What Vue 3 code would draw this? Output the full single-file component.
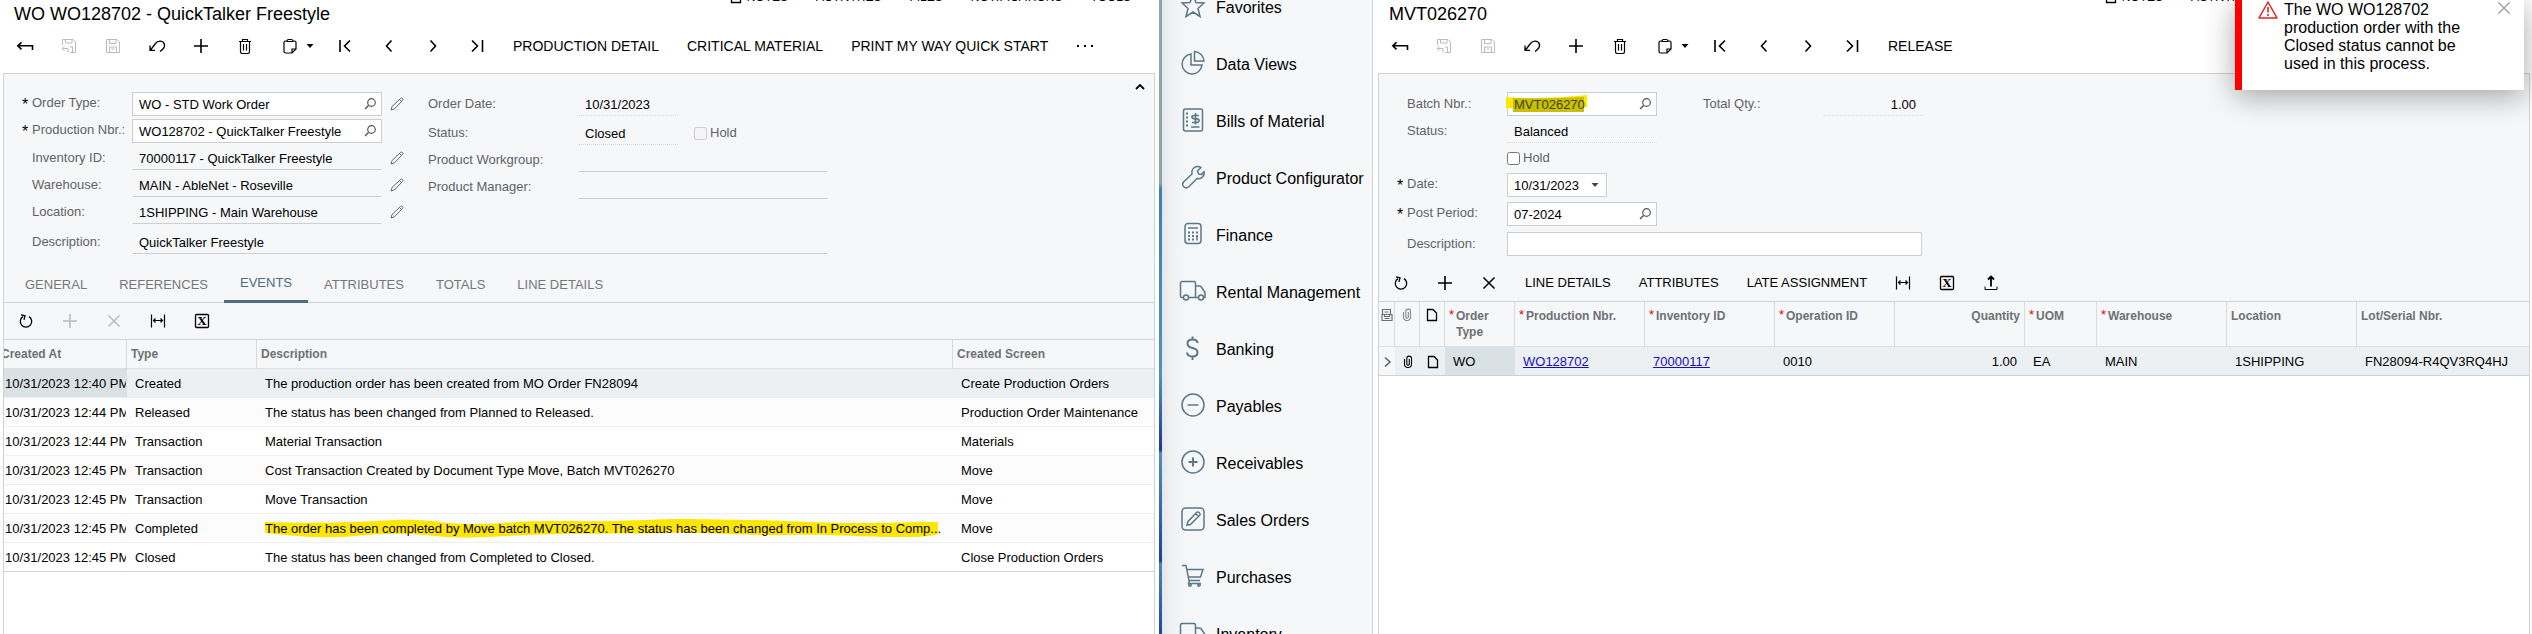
<template>
  <div class="screen">
    <section class="window">
      <header class="title-bar">
        <h1>WO WO128702 - QuickTalker Freestyle</h1>
        <nav class="links">
          <a v-for="link in links" :key="link" href="#">
            <svg v-if="link === 'NOTES'" class="note-icon" viewBox="0 0 14 14" v-html="icons.note"></svg>{{ link }}
          </a>
        </nav>
      </header>

      <div class="toolbar main-toolbar">
        <button v-for="tool in mainTools" :key="tool.icon" type="button" class="tool" :class="{ wide: tool.menu }" :disabled="tool.disabled" :aria-label="tool.label">
          <svg class="icon" viewBox="0 0 20 20" v-html="icons[tool.icon]"></svg>
          <svg v-if="tool.menu" class="caret" viewBox="0 0 8 4" v-html="icons.caret"></svg>
        </button>
        <button v-for="action in orderActions" :key="action" type="button" class="text-tool">{{ action }}</button>
        <button type="button" class="text-tool" aria-label="More">
          <svg class="dots" viewBox="0 0 18 4" v-html="icons.dots"></svg>
        </button>
      </div>

      <div class="panel">
        <form class="form order-form" @submit.prevent>
          <button type="button" class="collapse" aria-label="Collapse">
            <svg viewBox="0 0 12 12" v-html="icons.up"></svg>
          </button>
          <div class="columns">
            <div class="column">
              <div v-for="field in orderFields" :key="field.id" class="row">
                <label :for="field.id"><span class="star">{{ field.required ? '*' : '' }}</span>{{ field.label }}</label>
                <div class="field w250" :class="field.required ? 'boxed' : 'lined'">
                  <input :id="field.id" v-model="field.value" type="text" />
                  <svg v-if="field.required" class="search" viewBox="0 0 14 14" v-html="icons.search"></svg>
                </div>
                <button v-if="field.edit" type="button" class="edit" :aria-label="'Edit ' + field.label">
                  <svg viewBox="0 0 14 14" v-html="icons.pencil"></svg>
                </button>
              </div>
            </div>
            <div class="column second">
              <div class="row loose">
                <label for="orderDate">Order Date:</label>
                <div class="field w100 dotted"><input id="orderDate" v-model="order.date" type="text" readonly /></div>
              </div>
              <div class="row">
                <label for="orderStatus">Status:</label>
                <div class="field w100 dotted"><input id="orderStatus" v-model="order.status" type="text" readonly /></div>
                <label class="check muted"><input v-model="order.hold" type="checkbox" disabled />Hold</label>
              </div>
              <div class="row">
                <label for="workgroup">Product Workgroup:</label>
                <div class="field w250 lined"><input id="workgroup" v-model="order.workgroup" type="text" /></div>
              </div>
              <div class="row">
                <label for="manager">Product Manager:</label>
                <div class="field w250 lined"><input id="manager" v-model="order.manager" type="text" /></div>
              </div>
            </div>
          </div>
          <div class="row last">
            <label for="orderDescription"><span class="star"></span>Description:</label>
            <div class="field w696 lined"><input id="orderDescription" v-model="order.description" type="text" /></div>
          </div>
        </form>

        <div class="tabs" role="tablist">
          <button v-for="tab in tabs" :key="tab" type="button" role="tab" class="tab" :class="{ active: tab === activeTab }" :aria-selected="tab === activeTab" @click="activeTab = tab">{{ tab }}</button>
        </div>

        <div class="toolbar grid-toolbar">
          <button v-for="tool in eventTools" :key="tool.icon" type="button" class="tool" :disabled="tool.disabled" :aria-label="tool.label">
            <svg class="icon" viewBox="0 0 20 20" v-html="icons[tool.icon]"></svg>
          </button>
        </div>

        <div class="grid-wrap">
          <table class="grid events">
            <colgroup>
              <col class="c130" />
              <col class="c130" />
              <col />
              <col class="c201" />
            </colgroup>
            <thead>
              <tr>
                <th>Created At</th>
                <th>Type</th>
                <th>Description</th>
                <th>Created Screen</th>
              </tr>
            </thead>
            <tbody>
              <tr v-for="(event, index) in events" :key="index" :class="{ selected: index === 0 }">
                <td class="clip">{{ event.createdAt }}</td>
                <td>{{ event.type }}</td>
                <td>
                  <div v-if="event.marked" class="marked">
                    <svg class="marker" viewBox="0 0 672 20" preserveAspectRatio="none">
                      <path d="M0 3C30 4 60 4 90 3S130 0 152 1S180 5 210 5S250 2 290 2S330 3 380 1S440 1 480 1S550 4 590 4S640 3 672 3V15C660 19 640 18 620 18S560 15 520 16S440 13 400 14S300 14 260 16S200 20 170 17S120 14 90 17S30 17 0 14Z" fill="#ffe600" />
                    </svg>
                    <div class="ellipsis">{{ event.description }}</div>
                  </div>
                  <template v-else>{{ event.description }}</template>
                </td>
                <td>{{ event.screen }}</td>
              </tr>
            </tbody>
          </table>
        </div>
      </div>
    </section>

    <div class="divider"></div>

    <section class="window with-nav">
      <nav class="side-nav">
        <a v-for="item in modules" :key="item.label" href="#">
          <svg viewBox="0 0 28 28" v-html="icons[item.icon]"></svg>{{ item.label }}
        </a>
      </nav>

      <div class="content">
        <header class="title-bar">
          <h1>MVT026270</h1>
          <nav class="links">
            <a v-for="link in links" :key="link" href="#">
              <svg v-if="link === 'NOTES'" class="note-icon" viewBox="0 0 14 14" v-html="icons.note"></svg>{{ link }}
            </a>
          </nav>
        </header>

        <div class="toolbar main-toolbar">
          <button v-for="tool in mainTools" :key="tool.icon" type="button" class="tool" :class="{ wide: tool.menu }" :disabled="tool.disabled" :aria-label="tool.label">
            <svg class="icon" viewBox="0 0 20 20" v-html="icons[tool.icon]"></svg>
            <svg v-if="tool.menu" class="caret" viewBox="0 0 8 4" v-html="icons.caret"></svg>
          </button>
          <button type="button" class="text-tool">RELEASE</button>
        </div>

        <div class="panel">
          <form class="form move-form" @submit.prevent>
            <div class="columns">
              <div class="column">
                <div class="row">
                  <label for="batch"><span class="star"></span>Batch Nbr.:</label>
                  <div class="field w150 boxed">
                    <svg class="batch-marker" viewBox="0 0 82 18">
                      <path d="M0 2C25 4 50 3 81 0V12C74 13 77 17 66 17H28L12 14L0 13Z" fill="#ffe600" />
                      <path d="M7 3C35 4 55 3 78 2V17H7Z" fill="#c9be08" />
                    </svg>
                    <input id="batch" v-model="move.batch" class="batch-input" type="text" />
                    <svg class="search" viewBox="0 0 14 14" v-html="icons.search"></svg>
                  </div>
                </div>
                <div class="row">
                  <label for="moveStatus"><span class="star"></span>Status:</label>
                  <div class="field w150 dotted"><input id="moveStatus" v-model="move.status" type="text" readonly /></div>
                </div>
                <div class="row">
                  <span class="label-gap"></span>
                  <label class="check"><input v-model="move.hold" type="checkbox" />Hold</label>
                </div>
                <div class="row loose">
                  <label for="moveDate"><span class="star">*</span>Date:</label>
                  <div class="field w100 boxed">
                    <input id="moveDate" v-model="move.date" type="text" />
                    <svg class="caret date-caret" viewBox="0 0 8 4" v-html="icons.caret"></svg>
                  </div>
                </div>
                <div class="row">
                  <label for="period"><span class="star">*</span>Post Period:</label>
                  <div class="field w150 boxed">
                    <input id="period" v-model="move.period" type="text" />
                    <svg class="search" viewBox="0 0 14 14" v-html="icons.search"></svg>
                  </div>
                </div>
              </div>
              <div class="column totals">
                <div class="row">
                  <label for="totalQty">Total Qty.:</label>
                  <div class="field w100 dotted"><input id="totalQty" v-model="move.total" class="number" type="text" readonly /></div>
                </div>
              </div>
            </div>
            <div class="row last">
              <label for="moveDescription"><span class="star"></span>Description:</label>
              <div class="field w415 boxed"><input id="moveDescription" v-model="move.description" type="text" /></div>
            </div>
          </form>

          <div class="toolbar grid-toolbar">
            <template v-for="tool in lineTools" :key="tool.label">
              <button v-if="tool.icon" type="button" class="tool" :aria-label="tool.label">
                <svg class="icon" viewBox="0 0 20 20" v-html="icons[tool.icon]"></svg>
              </button>
              <button v-else type="button" class="text-tool small">{{ tool.label }}</button>
            </template>
          </div>

          <div class="grid-wrap">
            <table class="grid lines">
              <colgroup>
                <col class="c16" />
                <col class="c25" />
                <col class="c25" />
                <col class="c70" />
                <col class="c130" />
                <col class="c130" />
                <col class="c120" />
                <col class="c130" />
                <col class="c72" />
                <col class="c130" />
                <col class="c130" />
                <col />
              </colgroup>
              <thead>
                <tr>
                  <th class="icon-cell"><svg viewBox="0 0 14 14" v-html="icons.rows"></svg></th>
                  <th class="icon-cell faded"><svg viewBox="0 0 14 14" v-html="icons.clip"></svg></th>
                  <th class="icon-cell dark"><svg viewBox="0 0 14 14" v-html="icons.note"></svg></th>
                  <th v-for="col in lineColumns" :key="col.label" :class="{ number: col.number, required: col.required }">{{ col.label }}</th>
                </tr>
              </thead>
              <tbody>
                <tr class="selected">
                  <td class="icon-cell arrow"><svg viewBox="0 0 14 14" v-html="icons.right"></svg></td>
                  <td class="icon-cell"><svg viewBox="0 0 14 14" v-html="icons.clip"></svg></td>
                  <td class="icon-cell"><svg viewBox="0 0 14 14" v-html="icons.note"></svg></td>
                  <td class="current">WO</td>
                  <td><a href="#">WO128702</a></td>
                  <td><a href="#">70000117</a></td>
                  <td>0010</td>
                  <td class="number">1.00</td>
                  <td>EA</td>
                  <td>MAIN</td>
                  <td>1SHIPPING</td>
                  <td>FN28094-R4QV3RQ4HJ</td>
                </tr>
              </tbody>
            </table>
          </div>
        </div>
      </div>

      <div v-if="showAlert" class="alert" role="alert">
        <svg class="warning" viewBox="0 0 20 20" v-html="icons.warning"></svg>
        <p>The WO WO128702 production order with the Closed status cannot be used in this process.</p>
        <button type="button" aria-label="Close" @click="showAlert = false">
          <svg viewBox="0 0 14 14" v-html="icons.close"></svg>
        </button>
      </div>
    </section>
  </div>
</template>

<script setup>
import { ref } from 'vue';

// inner markup of each svg, strokes follow currentColor
const icons = {
  back: '<path d="M2.500 9.800H17.500V14M6.500 6.300L2.800 9.800L6.500 13.300" stroke-width="1.6"/>',
  saveClose: '<path d="M3.5 9V3.500H14L16.500 6V16.500H11M6.500 3.500V7H13V3.500M11 11H13.500V16M9 16.500V12.500H3.500M5.500 10L3 12.500L5.500 15"/>',
  save: '<path d="M3.500 3.500H14L16.500 6V16.500H3.500ZM6.500 3.500V7.500H13V3.500M6.500 16.500V11H13.500V16.500M8.500 13H11.500"/>',
  undo: '<path d="M3.500 14L8.500 7.500C11 4 16.500 4.500 17.500 8.500C18 11.500 16 13.500 13 15.500M3 9.500V14.300H8" stroke-width="1.3"/>',
  plus: '<path d="M10 3V17M3 10H17" stroke-width="1.6"/>',
  trash: '<path d="M4 5.500H16M7.500 5.500V3.500H12.500V5.500M5.500 5.500V15.500Q5.500 17.500 7 17.500H13Q14.500 17.500 14.500 15.500V5.500M8.500 8V14.500M11.500 8V14.500" stroke-width="1.2"/>',
  clipboard: '<path d="M7 5H5.500Q4 5 4 6.500V15.500Q4 17 5.500 17H12L16 13V6.500Q16 5 14.500 5H13M7 5.500Q7 3.500 8.500 3.500H11.500Q13 3.500 13 5.500ZM12 17V13H16" stroke-width="1.2"/>',
  first: '<path d="M5 4V16M15 4.500L9.500 10L15 15.500" stroke-width="1.6"/>',
  prev: '<path d="M12.500 4.500L7.500 10L12.500 15.500" stroke-width="1.6"/>',
  next: '<path d="M7.500 4.500L12.500 10L7.500 15.500" stroke-width="1.6"/>',
  last: '<path d="M5 4.500L10.500 10L5 15.500M15.500 4V16" stroke-width="1.6"/>',
  refresh: '<path d="M7 5.600A5.700 5.700 0 1 0 13 5.600M5 3.800L9 4.800L8 8.800" stroke-width="1.3"/>',
  remove: '<path d="M4.500 4.500L15.500 15.500M15.500 4.500L4.500 15.500" stroke-width="1.5"/>',
  fit: '<path d="M3.500 3.500V16.500M16.500 3.500V16.500M5.500 9.500H14.500M7.500 7.500L5.500 9.500L7.500 11.500M12.500 7.500L14.500 9.500L12.500 11.500" stroke-width="1.2"/>',
  excel: '<rect x="3.500" y="3.500" width="13" height="13" rx="1" stroke-width="1.3"/><text x="10" y="14" text-anchor="middle" font-family="Liberation Serif, serif" font-weight="700" font-size="13" fill="currentColor" stroke="none">X</text>',
  upload: '<path d="M10 13.500V4M7 6.500L10 3.500L13 6.500" stroke-width="1.8"/><path d="M4 13.500V16.500H16V13.500"/>',
  caret: '<path d="M0.500 0H7.500L4 4Z" fill="currentColor" stroke="none"/>',
  dots: '<path d="M1 1H3V3H1ZM8 1H10V3H8ZM15 1H17V3H15Z" fill="currentColor" stroke="none"/>',
  up: '<path d="M2 8L6 4L10 8" stroke-width="1.8"/>',
  search: '<circle cx="8.500" cy="5.500" r="3.800" stroke-width="1.2"/><path d="M5.500 8.500L2 12" stroke-width="1.5"/>',
  pencil: '<path d="M1 13L2 9.500L10.500 1.500Q11.500 0.500 12.500 1.500T12.500 3.500L4.500 11.800ZM9.500 2.500L11.500 4.500"/>',
  note: '<path d="M2.500 1.500H8L11.500 5V12.500H2.500Z" stroke-width="1.3"/>',
  clip: '<path d="M3.500 4V9A3 3 0 0 0 10.500 9V3.500A2 2 0 0 0 5.800 3.500V9A1 1 0 0 0 8.300 9V4" stroke-width="1.1"/>',
  rows: '<path d="M2.500 6V1.500H10.500V6M4.500 4H8.500M2 6.500H12V12.500H2ZM4.500 6.500V8.500H9.500V6.500M4.500 10.500H9.500" stroke-width="1.200"/>',
  right: '<path d="M5 2.500L10 7L5 11.500" stroke-width="1.6"/>',
  close: '<path d="M1.500 1.500L12.500 12.500M12.500 1.500L1.500 12.500" stroke-width="1.2"/>',
  warning: '<path d="M10 1L19 17H1Z" stroke-width="1.500" stroke-linejoin="round"/><path d="M10 6V11.500M10 13V15" stroke-width="1.600"/>',
  star: '<path d="M14 3L17 10.500L25 11L19 16.500L21 24.500L14 20L7 24.500L9 16.500L3 11L11 10.500Z"/>',
  pie: '<path d="M12 5A10 10 0 1 0 23 16H12Z"/><path d="M15.500 2.500A10 10 0 0 1 25 12H15.500Z"/>',
  bill: '<rect x="4.500" y="3" width="19" height="22" rx="2"/><path d="M8 6.500V21" stroke-width="2" stroke-dasharray="2 2"/><path d="M12 21H20.500M20 9.500H15Q13 9.500 13 11T15 12.800H18Q20 12.800 20 14.500T18 16.500H13M16.500 7V18.500" stroke-width="1.7"/>',
  wrench: '<path d="M22 4.500L18.500 8L19.500 11L22.500 11.500L25 8.500C26 13 22.500 16.500 18 15.500L9.500 24C6 26.500 2 22.500 4.500 19L13 11C12 6 16.500 1.500 22 4.500Z" stroke-linejoin="round"/>',
  calculator: '<rect x="6" y="3.500" width="16" height="20" rx="3"/><path d="M9 8H19"/><path d="M9 12.500H19M9 16H19M9 19.500H15" stroke-width="2" stroke-dasharray="2 2"/><path d="M18 16V20.500"/>',
  truck: '<path d="M4.500 20.500H2.500Q1.500 20.500 1.500 19V6Q1.500 4.500 3 4.500H15Q16.500 4.500 16.500 6V20.500H9.500M16.500 9H20.500Q22 9 23 11L26 15.500V20.500H24.500M19.500 20.500H16.500"/><circle cx="7" cy="20.500" r="2.500"/><circle cx="22" cy="20.500" r="2.500"/>',
  dollar: '<path d="M18.500 9Q18.500 5.500 13.500 5.500T8.500 9.500Q8.500 13 13.500 14T18.500 18.500Q18.500 22.500 13.500 22.500T8 18.500M13.500 2.500V5.500M13.500 22.500V26" stroke-width="2"/>',
  minus: '<circle cx="14" cy="14" r="11"/><path d="M8.500 14H19.500"/>',
  add: '<circle cx="14" cy="14" r="11"/><path d="M9.500 14H18.500M14 9.500V18.500" stroke-width="2"/>',
  order: '<rect x="3" y="3" width="22" height="22" rx="3.500"/><path d="M8 20L9 16.500L17.500 7.500Q19 6.500 20.500 8T20 11L11.500 19.500ZM16.500 8.500L19.500 11.500"/>',
  cart: '<path d="M3 3.500H7L10 18.500H21M8 7.500H24L21.500 15H9.500M10.500 18.500L9.500 21.500H22"/><circle cx="11" cy="23" r="1.200"/><circle cx="20" cy="23" r="1.200"/>'
};

const links = ['NOTES', 'ACTIVITIES', 'FILES', 'NOTIFICATIONS', 'TOOLS'];

const mainTools = [
  { icon: 'back', label: 'Back' },
  { icon: 'saveClose', label: 'Save and close', disabled: true },
  { icon: 'save', label: 'Save', disabled: true },
  { icon: 'undo', label: 'Undo' },
  { icon: 'plus', label: 'Add' },
  { icon: 'trash', label: 'Delete' },
  { icon: 'clipboard', label: 'Clipboard', menu: true },
  { icon: 'first', label: 'First' },
  { icon: 'prev', label: 'Previous' },
  { icon: 'next', label: 'Next' },
  { icon: 'last', label: 'Last' }
];

const orderActions = ['PRODUCTION DETAIL', 'CRITICAL MATERIAL', 'PRINT MY WAY QUICK START'];

const orderFields = ref([
  { id: 'orderType', label: 'Order Type:', value: 'WO - STD Work Order', required: true, edit: true },
  { id: 'productionNbr', label: 'Production Nbr.:', value: 'WO128702 - QuickTalker Freestyle', required: true },
  { id: 'inventory', label: 'Inventory ID:', value: '70000117 - QuickTalker Freestyle', edit: true },
  { id: 'warehouse', label: 'Warehouse:', value: 'MAIN - AbleNet - Roseville', edit: true },
  { id: 'location', label: 'Location:', value: '1SHIPPING - Main Warehouse', edit: true }
]);

const order = ref({
  date: '10/31/2023',
  status: 'Closed',
  hold: false,
  workgroup: '',
  manager: '',
  description: 'QuickTalker Freestyle'
});

const tabs = ['GENERAL', 'REFERENCES', 'EVENTS', 'ATTRIBUTES', 'TOTALS', 'LINE DETAILS'];
const activeTab = ref('EVENTS');

const eventTools = [
  { icon: 'refresh', label: 'Refresh' },
  { icon: 'plus', label: 'Add row', disabled: true },
  { icon: 'remove', label: 'Delete row', disabled: true },
  { icon: 'fit', label: 'Fit to screen' },
  { icon: 'excel', label: 'Export to Excel' }
];

const events = [
  { createdAt: '10/31/2023 12:40 PM', type: 'Created', description: 'The production order has been created from MO Order FN28094', screen: 'Create Production Orders' },
  { createdAt: '10/31/2023 12:44 PM', type: 'Released', description: 'The status has been changed from Planned to Released.', screen: 'Production Order Maintenance' },
  { createdAt: '10/31/2023 12:44 PM', type: 'Transaction', description: 'Material Transaction', screen: 'Materials' },
  { createdAt: '10/31/2023 12:45 PM', type: 'Transaction', description: 'Cost Transaction Created by Document Type Move, Batch MVT026270', screen: 'Move' },
  { createdAt: '10/31/2023 12:45 PM', type: 'Transaction', description: 'Move Transaction', screen: 'Move' },
  { createdAt: '10/31/2023 12:45 PM', type: 'Completed', description: 'The order has been completed by Move batch MVT026270. The status has been changed from In Process to Comp...', screen: 'Move', marked: true },
  { createdAt: '10/31/2023 12:45 PM', type: 'Closed', description: 'The status has been changed from Completed to Closed.', screen: 'Close Production Orders' }
];

const modules = [
  { icon: 'star', label: 'Favorites' },
  { icon: 'pie', label: 'Data Views' },
  { icon: 'bill', label: 'Bills of Material' },
  { icon: 'wrench', label: 'Product Configurator' },
  { icon: 'calculator', label: 'Finance' },
  { icon: 'truck', label: 'Rental Management' },
  { icon: 'dollar', label: 'Banking' },
  { icon: 'minus', label: 'Payables' },
  { icon: 'add', label: 'Receivables' },
  { icon: 'order', label: 'Sales Orders' },
  { icon: 'cart', label: 'Purchases' },
  { icon: 'truck', label: 'Inventory' }
];

const move = ref({
  batch: 'MVT026270',
  status: 'Balanced',
  hold: false,
  date: '10/31/2023',
  period: '07-2024',
  total: '1.00',
  description: ''
});

const lineTools = [
  { icon: 'refresh', label: 'Refresh' },
  { icon: 'plus', label: 'Add row' },
  { icon: 'remove', label: 'Delete row' },
  { label: 'LINE DETAILS' },
  { label: 'ATTRIBUTES' },
  { label: 'LATE ASSIGNMENT' },
  { icon: 'fit', label: 'Fit to screen' },
  { icon: 'excel', label: 'Export to Excel' },
  { icon: 'upload', label: 'Upload' }
];

const lineColumns = [
  { label: 'Order Type', required: true },
  { label: 'Production Nbr.', required: true },
  { label: 'Inventory ID', required: true },
  { label: 'Operation ID', required: true },
  { label: 'Quantity', number: true },
  { label: 'UOM', required: true },
  { label: 'Warehouse', required: true },
  { label: 'Location' },
  { label: 'Lot/Serial Nbr.' }
];

const showAlert = ref(true);
</script>

<style>
body {
  margin: 0;
  background: #fff;
}
</style>

<style scoped>
* {
  box-sizing: border-box;
}

.screen {
  display: grid;
  grid-template-columns: 1159fr 3px 1370fr;
  height: 100vh;
  overflow: hidden;
  font-family: "Liberation Sans", Arial, sans-serif;
  font-size: 13px;
  line-height: 16px;
  color: #000;
}

svg {
  display: block;
  flex: none;
  fill: none;
  stroke: currentColor;
}

button,
input {
  font: inherit;
  color: inherit;
}

button {
  display: flex;
  align-items: center;
  justify-content: center;
  padding: 0;
  border: 0;
  background: none;
}

.window {
  position: relative;
  display: flex;
  flex-direction: column;
  min-width: 0;
  min-height: 0;
  overflow: hidden;
}

.window.with-nav {
  flex-direction: row;
}

.content {
  display: flex;
  flex: 1;
  flex-direction: column;
  min-width: 0;
}

.divider {
  background: linear-gradient(
    #8fa0ad 0, #8fa0ad 183px, #3a80b4 190px, #4287b6 260px, #4b97b2 375px,
    #17389a 450px, #4a94ae 453px, #2c62ae 520px, #1a3fa2 561px, #4689ad 564px, #1d47a6 634px
  );
}

/* title and links */
.title-bar {
  display: flex;
  align-items: flex-start;
  justify-content: space-between;
  height: 28px;
  padding: 0 28px 0 14px;
}

h1 {
  margin: 4px 0 0;
  font-size: 18px;
  font-weight: 400;
  line-height: 20px;
}

.links {
  display: flex;
  gap: 28px;
  margin-top: -10px;
  font-size: 12px;
  line-height: 14px;
}

.links a {
  display: flex;
  align-items: center;
  gap: 4px;
  color: #000;
  text-decoration: none;
}

.note-icon {
  width: 14px;
  height: 14px;
}

/* toolbars */
.toolbar {
  display: flex;
  align-items: center;
}

.main-toolbar {
  height: 45px;
  padding: 0 0 9px 3px;
}

.content .main-toolbar {
  padding-left: 5px;
}

.content .title-bar {
  padding: 0 26px 0 16px;
}

.grid-toolbar {
  height: 37px;
  border-bottom: 1px solid #cfd2d5;
  background: #f5f7f9;
}

.tool {
  width: 44px;
  height: 32px;
}

.tool.wide {
  gap: 6px;
  width: 56px;
  padding-left: 3px;
}

.tool:disabled {
  color: #bbb;
}

.icon {
  width: 20px;
  height: 20px;
}

.caret {
  width: 8px;
  height: 4px;
}

.text-tool {
  height: 32px;
  padding: 0 14px;
  font-size: 14px;
  white-space: nowrap;
}

.text-tool.small {
  font-size: 13px;
}

.dots {
  width: 18px;
  height: 4px;
}

/* panels */
.panel {
  display: flex;
  flex: 1;
  flex-direction: column;
  margin: 0 4px 0 3px;
  border: 1px solid #cfd2d5;
  border-bottom: 0;
}

.content .panel {
  margin: 0 2px 0 5px;
}

.form {
  position: relative;
  padding: 18px 18px 12px;
  background: #f5f7f9;
}

.move-form {
  padding-bottom: 9px;
}

.collapse {
  position: absolute;
  top: 6px;
  right: 7px;
  width: 14px;
  height: 14px;
}

.collapse svg {
  width: 12px;
  height: 12px;
}

.columns {
  display: flex;
}

.column.second {
  margin-left: 16px;
}

.column.totals {
  margin-left: 46px;
}

.row {
  display: flex;
  align-items: center;
  height: 24px;
  margin-bottom: 3px;
}

.row.loose {
  margin-bottom: 5px;
}

.row.last {
  margin: 3px 0 0;
}

.row > label,
.label-gap {
  display: flex;
  flex: none;
  width: 110px;
  color: #5f6368;
  white-space: nowrap;
}

.second .row > label {
  width: 150px;
}

.totals .row > label {
  width: 120px;
}

.star {
  width: 10px;
  padding-top: 2px;
  color: #000;
  font-size: 16px;
}

.row > label.check {
  align-items: center;
  gap: 3px;
  width: auto;
}

.row > label.muted {
  margin-left: 16px;
}

.check input {
  width: 13px;
  height: 13px;
  margin: 0;
}

.field {
  position: relative;
  display: flex;
  align-items: center;
  height: 24px;
  border: 1px solid transparent;
}

.field input {
  flex: 1;
  width: 100%;
  min-width: 0;
  height: 22px;
  padding: 1px 6px 0;
  border: 0;
  outline: none;
  background: none;
}

.boxed {
  border-color: #cccfd2;
  background: #fff;
}

.lined {
  border-bottom-color: #cccfd2;
}

.dotted {
  border-bottom: 1px dotted #d6d9dc;
}

.w100 {
  width: 100px;
}

.w150 {
  width: 150px;
}

.w250 {
  width: 250px;
}

.w415 {
  width: 415px;
}

.w696 {
  width: 696px;
}

.search {
  width: 14px;
  height: 14px;
  margin-right: 4px;
  color: #555;
}

.date-caret {
  margin-right: 7px;
  color: #444;
}

.batch-marker {
  position: absolute;
  top: 2px;
  left: -2px;
  width: 82px;
  height: 18px;
  stroke: none;
}

.field .batch-input {
  position: relative;
  color: #45430a;
}

.field input.number {
  text-align: right;
}

.edit {
  width: 30px;
  height: 24px;
  color: #666;
}

.edit svg {
  width: 14px;
  height: 14px;
}

/* tabs */
.tabs {
  display: flex;
  height: 37px;
  padding-left: 5px;
  border-bottom: 1px solid #cfd2d5;
  background: #f5f7f9;
}

.tab {
  height: 37px;
  padding: 0 16px;
  color: #777;
}

.tab.active {
  border-bottom: 3px solid #4f6c80;
  color: #4f6c80;
}

/* grids */
.grid-wrap {
  overflow: hidden;
}

.grid {
  width: 100%;
  table-layout: fixed;
  border-collapse: separate;
  border-spacing: 0;
}

.events {
  width: calc(100% + 7px);
  margin-left: -7px;
}

.c16 { width: 16px; }
.c25 { width: 25px; }
.c70 { width: 70px; }
.c72 { width: 72px; }
.c120 { width: 120px; }
.c130 { width: 130px; }
.c201 { width: 201px; }

th {
  padding: 6px 4px;
  border-right: 1px solid #d8dcdf;
  border-bottom: 1px solid #dbe0e4;
  background: #f5f7f9;
  color: #6e7174;
  font-size: 12px;
  font-weight: 700;
  text-align: left;
  vertical-align: top;
}

th:last-child {
  border-right: 0;
}

th.required {
  position: relative;
  padding-left: 11px;
}

th.required::before {
  content: "*";
  position: absolute;
  top: 5px;
  left: 4px;
  color: #e00;
  font-size: 13px;
  font-weight: 400;
}

td {
  height: 29px;
  padding: 1px 8px 0;
  border-bottom: 1px solid #edeff1;
  overflow: hidden;
  text-overflow: ellipsis;
  white-space: nowrap;
}

td.clip {
  text-overflow: clip;
  padding-right: 0;
  border-right: 1px solid transparent;
}

tbody tr:nth-child(even) td {
  background: #fcfcfc;
}

tr.selected td {
  background: #ecf0f3;
}

tr.selected td.clip,
tr.selected td.current {
  background: #dae1e5;
}

tbody tr:last-child td {
  border-bottom-color: #cfd2d5;
}

th.number,
td.number {
  text-align: right;
}

td a {
  color: #1a0dc0;
}

.lines thead th {
  height: 45px;
}

.icon-cell {
  padding-right: 0;
  padding-left: 0;
}

.icon-cell svg {
  width: 14px;
  height: 14px;
  margin: 0 auto;
}

.icon-cell.dark {
  color: #000;
}

.icon-cell.faded {
  color: #888;
}

tr.selected td.arrow {
  background: #f5f7f9;
  color: #666;
}

.marked {
  position: relative;
}

.marker {
  position: absolute;
  top: -2px;
  left: 0;
  width: calc(100% - 7px);
  height: 20px;
  stroke: none;
}

.ellipsis {
  position: relative;
  overflow: hidden;
  text-overflow: ellipsis;
}

/* module menu */
.side-nav {
  flex: none;
  width: 211px;
  border-right: 1px solid #cfd2d5;
  background: linear-gradient(90deg, #e4e7ea 0, #f0f2f4 10px, #f5f7f9 28px);
}

.side-nav a {
  display: flex;
  align-items: center;
  gap: 9px;
  height: 57px;
  padding-left: 17px;
  color: #000;
  font-size: 16px;
  text-decoration: none;
  white-space: nowrap;
}

.side-nav a:first-child {
  margin-top: -21px;
}

.side-nav svg {
  width: 28px;
  height: 28px;
  margin-bottom: 4px;
  color: #5b788a;
  stroke-width: 1.5;
}

/* error message */
.alert {
  position: absolute;
  top: 0;
  right: 8px;
  display: flex;
  align-items: flex-start;
  width: 289px;
  padding: 1px 13px 17px 16px;
  border-left: 7px solid #f00;
  background: #fff;
  box-shadow: 0 6px 30px rgba(0, 0, 0, 0.35);
  font-size: 16px;
  line-height: 18px;
}

.alert p {
  flex: 1;
  margin: 0;
  padding: 0 8px 0 6px;
}

.warning {
  width: 20px;
  height: 20px;
  color: #e02424;
}

.alert button {
  height: 14px;
  color: #999;
}

.alert button svg {
  width: 14px;
  height: 14px;
}
</style>
